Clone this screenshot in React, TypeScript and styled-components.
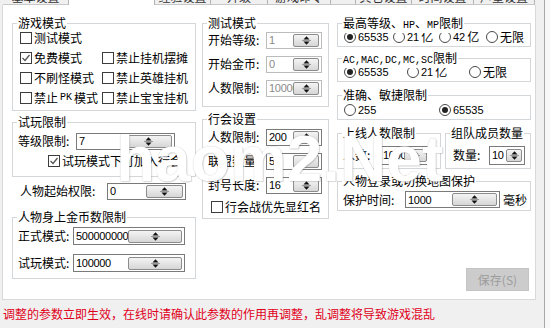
import React from "react";
import styled, { createGlobalStyle } from "styled-components";

const Global = createGlobalStyle`
  html, body { margin: 0; padding: 0; background: #f7f7f7; }
  body {
    font-family: "Noto Sans CJK SC", "Liberation Sans", sans-serif;
    font-size: 12px;
    line-height: 14px;
    color: #000;
  }
  * { box-sizing: border-box; }
`;

const Window = styled.div`
  position: relative;
  width: 545px;
  height: 328px;
  background: #f0f0f0;
  border-right: 1px solid #a8a8a8;
  overflow: hidden;
  display: flex;
  flex-direction: column;
`;

const TabStrip = styled.div`
  height: 5px;
  display: flex;
  padding-left: 3px;
  overflow: hidden;
`;

const Tab = styled.div<{ $w: number; $sel?: boolean }>`
  width: ${(p) => p.$w}px;
  height: 5px;
  flex-shrink: 0;
  overflow: hidden;
  background: ${(p) => (p.$sel ? "#fff" : "#f0f0f0")};
  border-right: 1px solid #b4b4b4;
  border-bottom: ${(p) => (p.$sel ? "none" : "1px solid #c8c8c8")};
  text-align: center;
  color: #333;
  font-size: 12px;
  line-height: 12px;
  & > span {
    display: block;
    margin-top: -9px;
    visibility: ${(p) => (p.$sel ? "hidden" : "visible")};
  }
`;

const Sheet = styled.div`
  margin-left: 2px;
  width: 534px;
  height: 295px;
  background: #fff;
  border: 1px solid #d9d9d9;
  border-top: none;
  display: flex;
  padding: 18px 0 0 9px;
`;

const Column = styled.div<{ $w: number; $ml?: number }>`
  width: ${(p) => p.$w}px;
  margin-left: ${(p) => p.$ml ?? 0}px;
  display: flex;
  flex-direction: column;
`;

const Group = styled.div<{ $mt?: number; $pt: number; $pb: number; $pl?: number; $w?: number }>`
  position: relative;
  margin-top: ${(p) => p.$mt ?? 0}px;
  padding: ${(p) => p.$pt}px 4px ${(p) => p.$pb}px ${(p) => p.$pl ?? 5}px;
  border: 1px solid #d3d7da;
  ${(p) => (p.$w ? `width: ${p.$w}px;` : "")}
`;

const Legend = styled.span`
  position: absolute;
  top: -8px;
  left: 4px;
  padding: 0 1px;
  background: #fff;
  white-space: nowrap;
  line-height: 14px;
`;

const Lat = styled.span`
  font-family: "Liberation Mono", monospace;
  font-size: 10px;
`;

const CheckGrid = styled.div`
  display: grid;
  grid-template-columns: 82px 1fr;
  grid-auto-rows: 20px;
  padding-left: 2px;
`;

const CheckItem = styled.label<{ $span?: boolean; $ml?: number }>`
  display: flex;
  align-items: center;
  gap: 2px;
  white-space: nowrap;
  margin-left: ${(p) => p.$ml ?? 0}px;
  ${(p) => (p.$span ? "grid-column: 1 / span 2;" : "")}
`;

const Box = styled.span`
  width: 12px;
  height: 12px;
  border: 1px solid #3c3c3c;
  background: #fff;
  flex-shrink: 0;
  display: inline-flex;
  align-items: center;
  justify-content: center;
`;

const Row = styled.div<{ $h: number; $pl?: number; $mt?: number }>`
  height: ${(p) => p.$h}px;
  margin-top: ${(p) => p.$mt ?? 0}px;
  display: flex;
  align-items: center;
  padding-left: ${(p) => p.$pl ?? 0}px;
  white-space: nowrap;
`;

const Label = styled.span<{ $w: number }>`
  width: ${(p) => p.$w}px;
  flex-shrink: 0;
  white-space: nowrap;
  overflow: hidden;
`;

const Field = styled.div<{ $w: number; $h?: number; $dis?: boolean }>`
  width: ${(p) => p.$w}px;
  height: ${(p) => p.$h ?? 17}px;
  flex-shrink: 0;
  display: flex;
  align-items: center;
  padding: 0 2px 0 2px;
  background: #fff;
  border: 1px solid ${(p) => (p.$dis ? "#bcbcbc" : "#7a7a7a")};
  color: ${(p) => (p.$dis ? "#8a8a8a" : "#000")};
  font-family: "Liberation Sans", sans-serif;
  font-size: 11px;
  letter-spacing: -0.3px;
  & > span {
    flex: 1;
    min-width: 0;
  }
`;

const SpinBox = styled.span`
  width: 11px;
  height: 13px;
  flex-shrink: 0;
  border: 1px solid #8c8c8c;
  border-radius: 2px;
  background: linear-gradient(#f4f4f4, #d6d6d6);
  display: flex;
  align-items: center;
  justify-content: center;
`;

const Spin = () => (
  <SpinBox>
    <svg width="9" height="11" viewBox="0 0 9 11">
      <polygon points="1.5,4.5 7.5,4.5 4.5,1.2" fill="#111" />
      <line x1="0" y1="5.5" x2="9" y2="5.5" stroke="#9a9a9a" strokeWidth="1" />
      <polygon points="1.5,6.5 7.5,6.5 4.5,9.8" fill="#111" />
    </svg>
  </SpinBox>
);

const Input = ({ w, h, v, dis }: { w: number; h?: number; v: string; dis?: boolean }) => (
  <Field $w={w} $h={h} $dis={dis}>
    <span>{v}</span>
    <Spin />
  </Field>
);

const Check = ({ on }: { on?: boolean }) => (
  <Box>
    {on && (
      <svg width="10" height="10" viewBox="0 0 10 10">
        <polyline points="1.5,5 4,7.5 8.5,2" fill="none" stroke="#555" strokeWidth="1.3" />
      </svg>
    )}
  </Box>
);

const RadioRow = styled.div`
  height: 18px;
  display: flex;
  align-items: center;
  padding-left: 1px;
`;

const RadioItem = styled.label<{ $w?: number }>`
  display: flex;
  align-items: center;
  gap: 2px;
  white-space: nowrap;
  ${(p) => (p.$w ? `width: ${p.$w}px;` : "")}
  flex-shrink: 0;
`;

const RadioDot = styled.span<{ $on?: boolean }>`
  width: 12px;
  height: 12px;
  border-radius: 50%;
  border: 1px solid #4a4a4a;
  background: #fff;
  display: inline-flex;
  align-items: center;
  justify-content: center;
  flex-shrink: 0;
  &::after {
    content: "";
    width: 6px;
    height: 6px;
    border-radius: 50%;
    background: ${(p) => (p.$on ? "#222" : "transparent")};
  }
`;

const Num = styled.span`
  font-family: "Liberation Sans", sans-serif;
  font-size: 11px;
`;

const Unit = styled.span`
  margin-left: 3px;
`;

const SideBySide = styled.div`
  display: flex;
  gap: 4px;
  margin-top: 13px;
`;

const SaveButton = styled.button`
  align-self: flex-end;
  margin-top: 57px;
  margin-right: 2px;
  width: 63px;
  height: 23px;
  border: 1px solid #c4c4c4;
  background: #cccccc;
  color: #9c9c9c;
  font-family: "Noto Sans CJK SC", sans-serif;
  font-size: 12px;
  padding: 0;
`;

const Warning = styled.div`
  height: 28px;
  display: flex;
  align-items: center;
  padding-left: 3px;
  color: #e0001b;
  font-size: 12px;
`;

const Watermark = styled.div`
  position: absolute;
  left: 116px;
  top: 124px;
  font-family: "Liberation Sans", sans-serif;
  font-weight: bold;
  font-size: 64px;
  line-height: 70px;
  color: #fff;
  text-shadow: 0 0 1px rgba(110, 110, 110, 0.45), 1px 1px 1px rgba(120, 120, 120, 0.25);
  pointer-events: none;
  white-space: nowrap;
`;

const tabs: { w: number; t: string; sel?: boolean }[] = [
  { w: 66, t: "基本设置" },
  { w: 86, t: "游戏设置", sel: true },
  { w: 56, t: "经验设置" },
  { w: 57, t: "升级" },
  { w: 63, t: "游戏命令" },
  { w: 25, t: "" },
  { w: 56, t: "其它设置" },
  { w: 62, t: "时间设置" },
  { w: 61, t: "声望设置" },
];

export default function App() {
  return (
    <Window>
      <Global />
      <TabStrip>
        {tabs.map((t, i) => (
          <Tab key={i} $w={t.w} $sel={t.sel}>
            <span>{t.t}</span>
          </Tab>
        ))}
      </TabStrip>
      <Sheet>
        <Column $w={184}>
          <Group $pt={4} $pb={2}>
            <Legend>游戏模式</Legend>
            <CheckGrid>
              <CheckItem $span>
                <Check />测试模式
              </CheckItem>
              <CheckItem>
                <Check on />免费模式
              </CheckItem>
              <CheckItem>
                <Check />禁止挂机摆摊
              </CheckItem>
              <CheckItem>
                <Check />不刷怪模式
              </CheckItem>
              <CheckItem>
                <Check />禁止英雄挂机
              </CheckItem>
              <CheckItem>
                <Check />禁止<Lat>PK</Lat>模式
              </CheckItem>
              <CheckItem>
                <Check />禁止宝宝挂机
              </CheckItem>
            </CheckGrid>
          </Group>
          <Group $mt={11} $pt={8} $pb={5}>
            <Legend>试玩限制</Legend>
            <Row $h={20}>
              <Label $w={58}>等级限制:</Label>
              <Input w={99} v="7" />
            </Row>
            <Row $h={20}>
              <CheckItem $ml={30}>
                <Check on />试玩模式下可加入行会
              </CheckItem>
            </Row>
          </Group>
          <Row $h={18} $pl={8} $mt={5}>
            <Label $w={87}>人物起始权限:</Label>
            <Input w={79} v="0" />
          </Row>
          <Group $mt={17} $pt={9} $pb={6}>
            <Legend>人物身上金币数限制</Legend>
            <Row $h={18}>
              <Label $w={55}>正式模式:</Label>
              <Input w={112} h={18} v="500000000" />
            </Row>
            <Row $h={18} $mt={9}>
              <Label $w={55}>试玩模式:</Label>
              <Input w={112} h={18} v="100000" />
            </Row>
          </Group>
        </Column>

        <Column $w={127} $ml={6}>
          <Group $pt={4} $pb={6}>
            <Legend>测试模式</Legend>
            <Row $h={24}>
              <Label $w={58}>开始等级:</Label>
              <Input w={56} v="1" dis />
            </Row>
            <Row $h={24}>
              <Label $w={58}>开始金币:</Label>
              <Input w={56} v="0" dis />
            </Row>
            <Row $h={24}>
              <Label $w={58}>人数限制:</Label>
              <Input w={56} v="10000" dis />
            </Row>
          </Group>
          <Group $mt={12} $pt={5} $pb={1}>
            <Legend>行会设置</Legend>
            <Row $h={24}>
              <Label $w={58}>人数限制:</Label>
              <Input w={56} v="200" />
            </Row>
            <Row $h={24}>
              <Label $w={58}>联盟数量:</Label>
              <Input w={56} v="5" />
            </Row>
            <Row $h={24}>
              <Label $w={58}>封号长度:</Label>
              <Input w={56} v="16" />
            </Row>
            <Row $h={20}>
              <CheckItem $ml={3}>
                <Check />行会战优先显红名
              </CheckItem>
            </Row>
          </Group>
        </Column>

        <Column $w={194} $ml={8}>
          <Group $pt={4} $pb={0}>
            <Legend>
              最高等级、<Lat>HP</Lat>、<Lat>MP</Lat>限制
            </Legend>
            <RadioRow>
              <RadioItem $w={49}>
                <RadioDot $on />
                <Num>65535</Num>
              </RadioItem>
              <RadioItem $w={46}>
                <RadioDot />
                <Num>21</Num>亿
              </RadioItem>
              <RadioItem $w={47}>
                <RadioDot />
                <Num>42</Num>亿
              </RadioItem>
              <RadioItem>
                <RadioDot />无限
              </RadioItem>
            </RadioRow>
          </Group>
          <Group $mt={11} $pt={4} $pb={0}>
            <Legend>
              <Lat>AC,MAC,DC,MC,SC</Lat>限制
            </Legend>
            <RadioRow>
              <RadioItem $w={63}>
                <RadioDot $on />
                <Num>65535</Num>
              </RadioItem>
              <RadioItem $w={62}>
                <RadioDot />
                <Num>21</Num>亿
              </RadioItem>
              <RadioItem>
                <RadioDot />无限
              </RadioItem>
            </RadioRow>
          </Group>
          <Group $mt={13} $pt={5} $pb={0}>
            <Legend>准确、敏捷限制</Legend>
            <RadioRow>
              <RadioItem $w={95}>
                <RadioDot />
                <Num>255</Num>
              </RadioItem>
              <RadioItem>
                <RadioDot $on />
                <Num>65535</Num>
              </RadioItem>
            </RadioRow>
          </Group>
          <SideBySide>
            <Group $pt={11} $pb={3} $w={104}>
              <Legend>上线人数限制</Legend>
              <Row $h={20}>
                <Label $w={37}>人数:</Label>
                <Input w={50} h={19} v="1000" />
              </Row>
            </Group>
            <Group $pt={11} $pb={3} $pl={7} $w={86}>
              <Legend>组队成员数量</Legend>
              <Row $h={20}>
                <Label $w={36}>数量:</Label>
                <Input w={36} h={19} v="10" />
              </Row>
            </Group>
          </SideBySide>
          <Group $mt={12} $pt={8} $pb={1}>
            <Legend>人物登录或切换地图保护</Legend>
            <Row $h={19}>
              <Label $w={62}>保护时间:</Label>
              <Input w={95} v="1000" />
              <Unit>毫秒</Unit>
            </Row>
          </Group>
          <SaveButton disabled>保存(S)</SaveButton>
        </Column>
      </Sheet>
      <Warning>调整的参数立即生效，在线时请确认此参数的作用再调整，乱调整将导致游戏混乱</Warning>
      <Watermark>haom2.Net</Watermark>
    </Window>
  );
}
